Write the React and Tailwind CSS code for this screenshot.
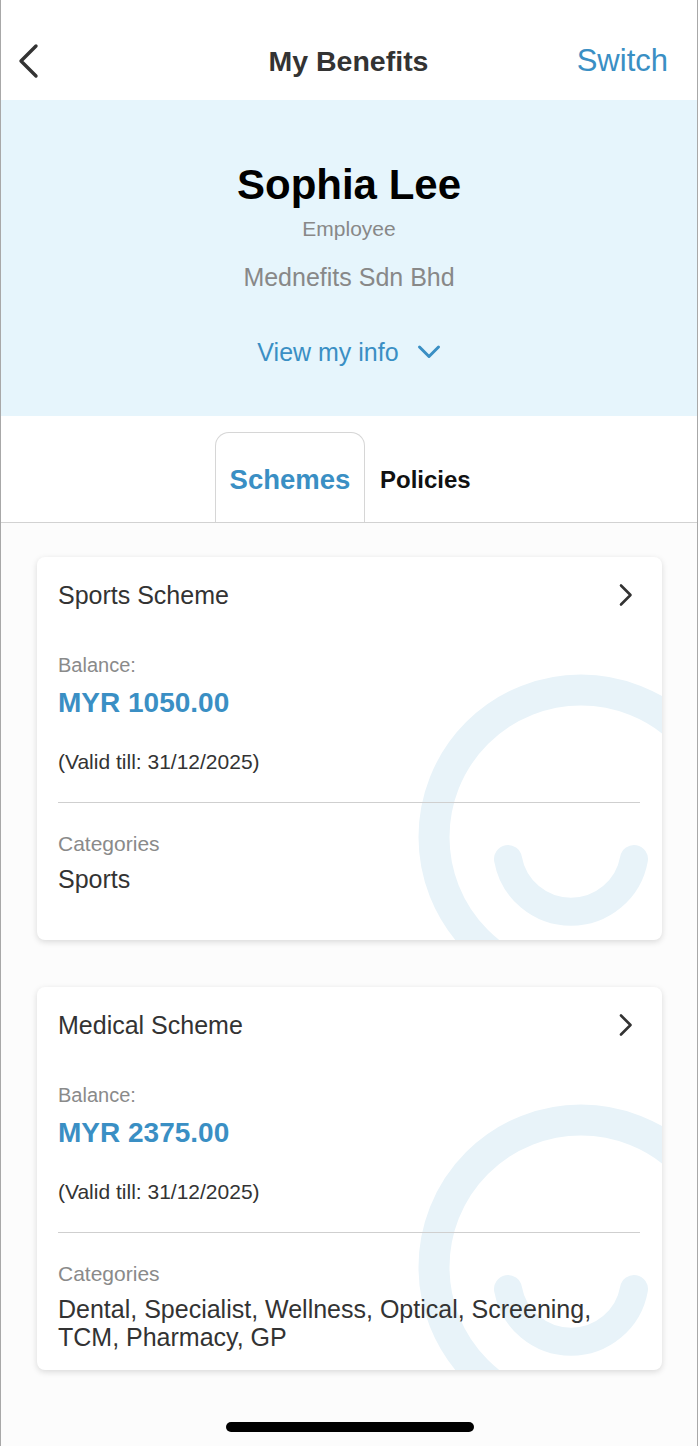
const FONT = { fontFamily: '"Liberation Sans", Arial, Helvetica, sans-serif' }

const SCHEMES = [
  {
    name: 'Sports Scheme',
    balance: 'MYR 1050.00',
    validTill: '31/12/2025',
    categories: 'Sports',
  },
  {
    name: 'Medical Scheme',
    balance: 'MYR 2375.00',
    validTill: '31/12/2025',
    categories: 'Dental, Specialist, Wellness, Optical, Screening, TCM, Pharmacy, GP',
  },
]

function Watermark() {
  // faint logo drawn behind the card contents
  return (
    <svg
      className="absolute inset-0 pointer-events-none"
      width="625"
      height="383"
      viewBox="0 0 625 383"
      fill="none"
    >
      <circle cx="544" cy="280" r="147" stroke="#e8f3f9" strokeWidth="31" />
      <path
        d="M471 302 A64 64 0 0 0 597 302"
        stroke="#e8f3f9"
        strokeWidth="28"
        strokeLinecap="round"
      />
    </svg>
  )
}

function SchemeCard({ scheme }) {
  return (
    <div className="relative h-[383px] w-[625px] overflow-hidden rounded-[8px] bg-white shadow-[0_2px_6px_rgba(0,0,0,0.14)]">
      <Watermark />
      <div className="relative flex flex-col px-[21px] pt-[23px]">
        <div className="flex h-[30px] items-center justify-between">
          <span className="text-[25px] leading-[30px] text-[#333]">{scheme.name}</span>
          <svg width="16" height="24" viewBox="0 0 16 24" fill="none" className="mr-[7px]">
            <path d="M3 2.5 L12.5 12 L3 21.5" stroke="#333" strokeWidth="2.6" strokeLinecap="round" strokeLinejoin="round" />
          </svg>
        </div>
        <span className="mt-[43px] text-[20px] leading-[24px] text-[#8a8a8a]">Balance:</span>
        <span className="mt-[9px] text-[28px] font-bold leading-[34px] text-[#3a8fc4]">{scheme.balance}</span>
        <span className="mt-[29px] text-[21px] leading-[26px] text-[#333]">(Valid till: {scheme.validTill})</span>
        <div className="mt-[27px] h-px w-[582px] bg-[#cfcfcf]" />
        <span className="mt-[28px] text-[21px] leading-[26px] text-[#8a8a8a]">Categories</span>
        <p className="mt-[8px] w-[570px] text-[25px] leading-[28px] text-[#333]">{scheme.categories}</p>
      </div>
    </div>
  )
}

export default function App() {
  return (
    <div style={FONT} className="flex min-h-[1446px] w-[698px] flex-col border-x border-[#a8a8a8] bg-[#fcfcfc]">
      {/* Top bar */}
      <div className="grid h-[100px] grid-cols-[1fr_auto_1fr] items-center bg-white pl-[16px] pr-[29px] pt-[22px]">
        <svg width="24" height="36" viewBox="0 0 24 36" fill="none">
          <path d="M19 3 L4 18 L19 33" stroke="#333" strokeWidth="3.4" strokeLinecap="round" strokeLinejoin="round" />
        </svg>
        <h1 className="ml-[12px] text-[28.5px] font-bold text-[#333]">My Benefits</h1>
        <span className="justify-self-end text-[31px] text-[#3a8fc4]">Switch</span>
      </div>

      {/* Profile */}
      <div className="flex h-[316px] flex-col items-center bg-[#e6f5fc] pt-[60px]">
        <h2 className="text-[42px] font-bold leading-[50px] text-black">Sophia Lee</h2>
        <span className="mt-[6px] text-[21px] leading-[26px] text-[#888]">Employee</span>
        <span className="mt-[20px] text-[25px] leading-[30px] text-[#888]">Mednefits Sdn Bhd</span>
        <div className="mt-[45px] flex items-center gap-[18px]">
          <span className="text-[25px] leading-[30px] text-[#3a8fc4]">View my info</span>
          <svg width="24" height="16" viewBox="0 0 24 16" fill="none">
            <path d="M2.5 3 L12 12.5 L21.5 3" stroke="#3a8fc4" strokeWidth="3" strokeLinecap="round" strokeLinejoin="round" />
          </svg>
        </div>
      </div>

      {/* Tabs */}
      <div className="flex h-[107px] items-end border-b border-[#d2d2d2] bg-white pl-[214px]">
        <div className="flex h-[90px] w-[150px] items-center justify-center rounded-t-[14px] border-x border-t border-[#d6d6d6] pt-[4px]">
          <span className="text-[27.5px] font-bold text-[#3a8fc4]">Schemes</span>
        </div>
        <div className="flex h-[90px] items-center pl-[15px] pt-[6px]">
          <span className="text-[24px] font-bold text-[#111]">Policies</span>
        </div>
      </div>

      {/* Scheme cards */}
      <div className="flex flex-col gap-[47px] pl-[36px] pt-[34px]">
        {SCHEMES.map((s) => (
          <SchemeCard key={s.name} scheme={s} />
        ))}
      </div>

      {/* Home indicator */}
      <div className="mt-auto flex justify-center pb-[14px]">
        <div className="ml-[1px] h-[10px] w-[248px] rounded-full bg-black" />
      </div>
    </div>
  )
}
